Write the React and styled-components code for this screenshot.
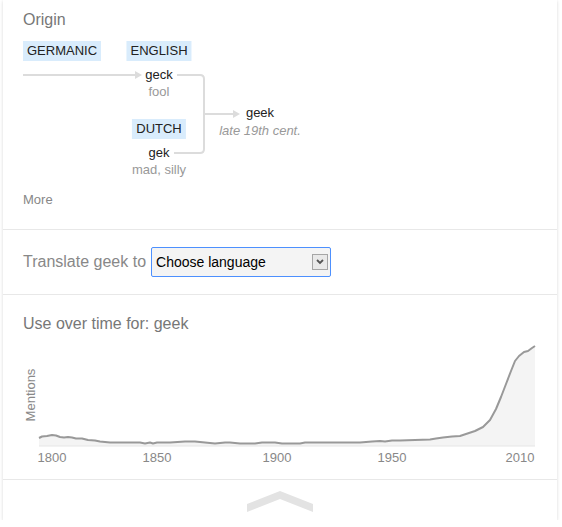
import React from "react";
import styled, { createGlobalStyle } from "styled-components";

const Global = createGlobalStyle`
  html, body { margin: 0; padding: 0; background: #fff; }
  body { font-family: "Liberation Sans", Arial, sans-serif; }
`;

const Card = styled.div`
  margin-left: 3px;
  width: 554px;
  background: #fff;
  box-shadow: 0 1px 3px rgba(0, 0, 0, 0.16);
  display: flex;
  flex-direction: column;
`;

const Section = styled.div`
  padding: ${(p) => p.$pad};
  border-bottom: ${(p) => (p.$last ? "none" : "1px solid #e8e8e8")};
`;

const Title = styled.div`
  font-size: 16px;
  line-height: 20px;
  color: #777;
`;

const Diagram = styled.div`
  position: relative;
  margin-top: 11px;
  height: 151px;
`;

const Lines = styled.svg`
  position: absolute;
  left: 0;
  top: 0;
  overflow: visible;
`;

const Node = styled.div`
  position: absolute;
  left: ${(p) => p.$x}px;
  top: ${(p) => p.$y}px;
  transform: ${(p) => (p.$center ? "translateX(-50%)" : "none")};
  display: flex;
  flex-direction: column;
  align-items: center;
  white-space: nowrap;
`;

const Tag = styled.div`
  height: 20px;
  line-height: 20px;
  padding: 0 4px;
  background: #d9ecfc;
  color: #222;
  font-size: 13px;
`;

const Word = styled.div`
  margin-top: ${(p) => p.$mt || 0}px;
  font-size: 13px;
  line-height: 16px;
  color: #222;
`;

const Gloss = styled.div`
  margin-top: ${(p) => p.$mt || 0}px;
  font-size: 13px;
  line-height: 17px;
  color: #999;
  font-style: ${(p) => (p.$italic ? "italic" : "normal")};
`;

const More = styled.div`
  font-size: 13px;
  line-height: 16px;
  color: #878787;
`;

const TranslateRow = styled.div`
  display: flex;
  align-items: center;
  gap: 5px;
`;

const Label = styled.span`
  font-size: 16px;
  color: #888;
`;

const Select = styled.div`
  box-sizing: border-box;
  width: 180px;
  height: 30px;
  border: 1px solid #4d90fe;
  border-radius: 2px;
  background: #f4f4f4;
  display: flex;
  align-items: center;
  justify-content: space-between;
  padding: 0 2px 0 4px;
  font-size: 14px;
  color: #000;
`;

const DropButton = styled.div`
  box-sizing: border-box;
  width: 16px;
  height: 16px;
  border: 1px solid #a6a6a6;
  background: #e9e9e9;
  display: flex;
  align-items: center;
  justify-content: center;
`;

const ChartWrap = styled.div`
  margin-top: 5px;
  display: flex;
`;

const Footer = styled.div`
  height: 40px;
  display: flex;
  justify-content: center;
  padding-top: 11px;
  box-sizing: border-box;
`;

const pts = [
  [39, 439], [42, 437.5], [47, 437], [52, 436], [56, 436.5], [60, 438], [64, 438.5],
  [68, 438], [72, 438.5], [76, 439.5], [82, 439.5], [88, 441], [95, 441.5], [100, 442.5],
  [110, 443.5], [120, 443.5], [140, 443.5], [145, 444.5], [150, 443.5], [153, 444.5],
  [157, 443.5], [170, 443.5], [185, 442.5], [195, 442.5], [205, 443.5], [215, 444.5],
  [225, 443.5], [230, 443.5], [240, 444.5], [255, 444.5], [262, 443.5], [275, 443.5],
  [282, 444.5], [300, 444.5], [305, 443.5], [360, 443.5], [372, 442.5], [380, 442],
  [385, 442.5], [392, 441.5], [400, 441.5], [415, 441], [430, 440.5], [436, 439.5],
  [443, 438.5], [452, 437.5], [460, 437], [466, 435], [475, 432], [483, 428], [490, 421],
  [496, 410], [501, 398], [506, 385], [511, 372], [515, 362], [519, 357], [524, 353],
  [528, 352], [532, 349], [535, 347],
];

const OX = 23;
const OY = 340;
const linePath = pts.map(([x, y], i) => `${i ? "L" : "M"}${x - OX} ${y - OY}`).join(" ");
const areaPath = `${linePath} L${535 - OX} ${447 - OY} L${39 - OX} ${447 - OY} Z`;

const years = [
  ["1800", 52],
  ["1850", 157],
  ["1900", 277],
  ["1950", 392],
  ["2010", 520],
];

function Chart() {
  return (
    <svg width="514" height="128" viewBox="0 0 514 128" style={{ display: "block" }}>
      <text
        x="0"
        y="0"
        transform={`translate(${35 - OX} ${396 - OY}) rotate(-90)`}
        textAnchor="middle"
        fontSize="13"
        fill="#888"
        fontFamily="Liberation Sans, Arial, sans-serif"
      >
        Mentions
      </text>
      <path d={areaPath} fill="#f4f4f4" />
      <line x1={39 - OX} x2={535 - OX} y1={447 - OY} y2={447 - OY} stroke="#e6e6e6" strokeWidth="1" />
      <path d={linePath} fill="none" stroke="#999" strokeWidth="2" strokeLinejoin="round" />
      {years.map(([t, x]) => (
        <text
          key={t}
          x={x - OX}
          y={463 - OY}
          textAnchor="middle"
          fontSize="13"
          fill="#888"
          fontFamily="Liberation Sans, Arial, sans-serif"
        >
          {t}
        </text>
      ))}
    </svg>
  );
}

export default function App() {
  return (
    <>
      <Global />
      <Card>
        <Section $pad="10px 20px 21px">
          <Title>Origin</Title>
          <Diagram>
            <Lines width="300" height="145">
              <g stroke="#dcdcdc" strokeWidth="2" fill="none">
                <line x1="0" y1="34" x2="113" y2="34" />
                <path d="M154 34 H177 Q181 34 181 38 V108 Q181 112 177 112 H151" />
                <line x1="181" y1="73" x2="211" y2="73" />
              </g>
              <polygon points="112,30 119,34 112,38" fill="#dcdcdc" />
              <polygon points="210,69 217,73 210,77" fill="#dcdcdc" />
            </Lines>
            <Node $x={0} $y={0}>
              <Tag>GERMANIC</Tag>
            </Node>
            <Node $x={136} $y={0} $center>
              <Tag>ENGLISH</Tag>
              <Word $mt={6}>geck</Word>
              <Gloss>fool</Gloss>
            </Node>
            <Node $x={136} $y={78} $center>
              <Tag>DUTCH</Tag>
              <Word $mt={6}>gek</Word>
              <Gloss>mad, silly</Gloss>
            </Node>
            <Node $x={237} $y={64} $center>
              <Word>geek</Word>
              <Gloss $mt={1} $italic>late 19th cent.</Gloss>
            </Node>
          </Diagram>
          <More>More</More>
        </Section>
        <Section $pad="17px 20px 17px">
          <TranslateRow>
            <Label>Translate geek to</Label>
            <Select>
              <span>Choose language</span>
              <DropButton>
                <svg width="8" height="6" viewBox="0 0 8 6">
                  <path d="M1 1 L4 4 L7 1" stroke="#555" strokeWidth="1.8" fill="none" />
                </svg>
              </DropButton>
            </Select>
          </TranslateRow>
        </Section>
        <Section $pad="19px 20px 12px">
          <Title>Use over time for: geek</Title>
          <ChartWrap>
            <Chart />
          </ChartWrap>
        </Section>
        <Section $pad="0" $last>
          <Footer>
            <svg width="66" height="21" viewBox="0 0 66 21">
              <polygon points="0,13 33,0 66,13 66,21 33,8 0,21" fill="#e3e3e3" />
            </svg>
          </Footer>
        </Section>
      </Card>
    </>
  );
}
